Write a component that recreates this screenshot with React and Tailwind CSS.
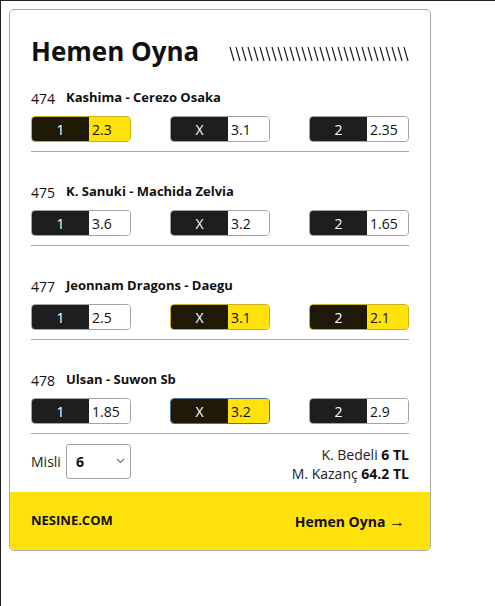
import { useState } from 'react';

const matches = [
  { no: 474, name: 'Kashima - Cerezo Osaka', odds: ['2.3', '3.1', '2.35'], picks: [0] },
  { no: 475, name: 'K. Sanuki - Machida Zelvia', odds: ['3.6', '3.2', '1.65'], picks: [] },
  { no: 477, name: 'Jeonnam Dragons - Daegu', odds: ['2.5', '3.1', '2.1'], picks: [1, 2] },
  { no: 478, name: 'Ulsan - Suwon Sb', odds: ['1.85', '3.2', '2.9'], picks: [1], focus: 1 },
];

const labels = ['1', 'X', '2'];

const OddButton = ({ label, odd, selected, focused }) => (
  <button
    className={`flex h-[26px] w-[100px] overflow-hidden rounded-[4px] border text-[14px] ${
      focused ? 'border-[#4f6f9f]' : selected ? 'border-[#c9b21a]' : 'border-[#a3a3a3]'
    }`}
  >
    <span
      className={`flex h-full w-[57px] items-center justify-center text-white ${
        selected ? 'bg-[#1f1a08]' : 'bg-[#1e1e1e]'
      }`}
    >
      {label}
    </span>
    <span
      className={`flex h-full flex-1 items-center pl-[3px] text-[#111] ${
        selected ? 'bg-[#ffe20c]' : 'bg-white'
      }`}
    >
      {odd}
    </span>
  </button>
);

const Stripes = () => (
  <svg width="180" height="16" viewBox="0 0 180 16" className="mt-[6px]">
    {Array.from({ length: 30 }).map((_, i) => (
      <line
        key={i}
        x1={1 + i * 6}
        y1="1"
        x2={5 + i * 6}
        y2="15"
        stroke="#222"
        strokeWidth="1.2"
      />
    ))}
  </svg>
);

export default function App() {
  const [misli, setMisli] = useState('6');

  return (
    <div
      className="min-h-screen border-l border-t border-[#222] bg-white pl-[8px] pt-[8px]"
      style={{ fontFamily: '"Open Sans", "Noto Sans", sans-serif' }}
    >
      <div className="w-[422px] overflow-hidden rounded-[5px] border border-[#aaa] bg-white">
        <div className="px-[21px] pt-[24px]">
          <div className="flex items-center justify-between">
            <h2 className="text-[26px] font-bold leading-[34px] text-[#111]">Hemen Oyna</h2>
            <Stripes />
          </div>

          {matches.map((m, idx) => (
            <div key={m.no} className={idx === 0 ? 'mt-[21px]' : 'mt-[31px]'}>
              <div className="flex h-[18px] items-center text-[13px] text-[#111]">
                <span className="w-[35px] text-[14px]">{m.no}</span>
                <span className="font-bold">{m.name}</span>
              </div>
              <div className="mt-[9px] flex justify-between">
                {labels.map((l, i) => (
                  <OddButton
                    key={l}
                    label={l}
                    odd={m.odds[i]}
                    selected={m.picks.includes(i)}
                    focused={m.focus === i}
                  />
                ))}
              </div>
              <div className="mt-[9px] h-px bg-[#a8a8a8]" />
            </div>
          ))}

          <div className="mt-[9px] flex items-start justify-between pb-[9px]">
            <div className="flex items-center gap-[5px] pt-[1px]">
              <span className="text-[14px] text-[#222]">Misli</span>
              <div className="relative">
                <select
                  value={misli}
                  onChange={(e) => setMisli(e.target.value)}
                  className="h-[35px] w-[65px] appearance-none rounded-[3px] border border-[#a3a3a3] bg-white pl-[9px] text-[14px] font-bold text-[#111]"
                >
                  {[1, 2, 3, 4, 5, 6, 7, 8, 9, 10].map((n) => (
                    <option key={n} value={n}>
                      {n}
                    </option>
                  ))}
                </select>
                <svg
                  className="pointer-events-none absolute right-[6px] top-[14px]"
                  width="9"
                  height="6"
                  viewBox="0 0 9 6"
                >
                  <path d="M1 1l3.5 3.5L8 1" fill="none" stroke="#777" strokeWidth="1.2" />
                </svg>
              </div>
            </div>
            <div className="pt-[2px] text-right text-[14px] leading-[19px] text-[#222]">
              <div>
                K. Bedeli <b className="text-[#111]">6 TL</b>
              </div>
              <div>
                M. Kazanç <b className="text-[#111]">64.2 TL</b>
              </div>
            </div>
          </div>
        </div>

        <div className="flex h-[58px] items-center justify-between bg-[#ffe20c] pl-[21px] pr-[25px] font-bold text-[#111]">
          <span className="text-[13px]">NESINE.COM</span>
          <span className="text-[14px]">
            Hemen Oyna <span className="text-[16px]">→</span>
          </span>
        </div>
      </div>
    </div>
  );
}
